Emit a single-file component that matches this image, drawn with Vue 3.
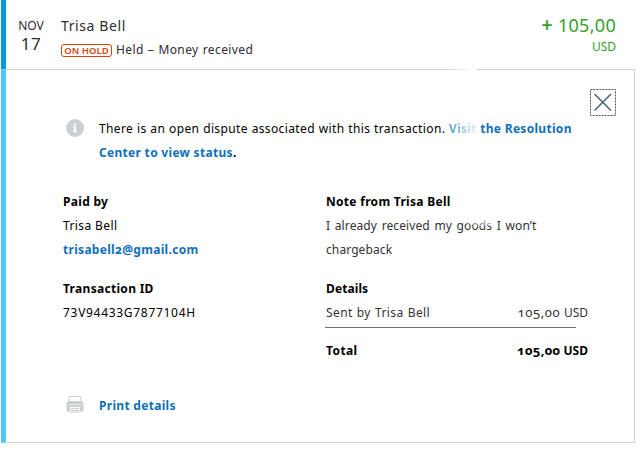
<!-- src/components/TransactionDetails.vue -->
<script setup>
const transaction = {
  month: 'NOV',
  day: '17',
  name: 'Trisa Bell',
  status: 'Held – Money received',
  amount: '105,00',
  currency: 'USD',
  email: 'trisabell2@gmail.com',
  id: '73V94433G7877104H',
  note: 'I already received my goods I won’t chargeback'
}
</script>

<template>
  <div class="transaction">
    <header class="summary">
      <div class="date">
        <span class="month">{{ transaction.month }}</span>
        <span class="day">{{ transaction.day }}</span>
      </div>
      <div class="info">
        <div class="name">{{ transaction.name }}</div>
        <div class="status">
          <span class="badge">ON HOLD</span>
          <span class="status-text">{{ transaction.status }}</span>
        </div>
      </div>
      <div class="amount">
        <div class="value"><span class="plus">+</span><span>{{ transaction.amount }}</span></div>
        <div class="currency">{{ transaction.currency }}</div>
      </div>
    </header>

    <section class="panel">
      <span class="line-fade"></span>
      <button class="close" aria-label="Close">
        <svg width="26" height="27" viewBox="0 0 26 27">
          <rect x="0.5" y="0.5" width="25" height="26" fill="none" stroke="#555" stroke-dasharray="2 1" />
          <path d="M4.5 5 L21 21.5 M21 5 L4.5 21.5" fill="none" stroke="#46606f" stroke-width="1.5" />
        </svg>
      </button>

      <div class="dispute">
        <svg class="info-icon" width="18" height="18" viewBox="0 0 18 18">
          <circle cx="9" cy="9" r="9" fill="#c9d1d5" />
          <path d="M8 4.5h2v2H8z M7 7.5h3V12h1v1.3H7V12h1V8.8H7z" fill="#fff" />
        </svg>
        <p class="message">
          <span class="plain">There is an open dispute associated with this transaction. </span>
          <a class="link"><span class="faded">Visit</span> the Resolution<br />Center to view status</a><b>.</b>
        </p>
      </div>

      <div class="columns">
        <div class="left">
          <h4>Paid by</h4>
          <div class="payer">{{ transaction.name }}</div>
          <a class="link">{{ transaction.email }}</a>
          <h4 class="second">Transaction ID</h4>
          <div class="id">{{ transaction.id }}</div>
        </div>

        <div class="right">
          <h4>Note from {{ transaction.name }}</h4>
          <p class="note">{{ transaction.note }}<span class="smudge"></span></p>
          <h4 class="second details">Details</h4>
          <div class="row sent">
            <span>Sent by {{ transaction.name }}</span>
            <span class="sum"><span class="number">{{ transaction.amount }}</span> USD</span>
          </div>
          <div class="rule"></div>
          <div class="row total">
            <span>Total</span>
            <span class="sum"><span class="number">{{ transaction.amount }}</span> USD</span>
          </div>
        </div>
      </div>

      <div class="print">
        <svg width="18" height="18" viewBox="0 0 18 18">
          <path d="M3 6.5V1.5h12v5" fill="none" stroke="#c9d1d5" />
          <path d="M2 6h14l1.5 2v7l-1 1.5h-15L.5 15V8z" fill="#c9d1d5" />
          <path d="M2 9.5h14" stroke="#e6eaeb" />
          <path d="M3.5 11.5h11v5.5h-11z" fill="#fff" stroke="#c9d1d5" />
          <path d="M5 13.5h8M5 15.5h8" stroke="#c9d1d5" />
        </svg>
        <a class="link">Print details</a>
      </div>
    </section>
  </div>
</template>

<style>
body {
  background: #fff;
}
</style>

<style scoped>
.transaction {
  width: 634px;
  margin-left: 1px;
  font-family: 'Noto Sans', sans-serif;
  font-size: 12px;
  line-height: 24px;
  color: #000;
  white-space: nowrap;
}

.summary {
  box-sizing: border-box;
  display: flex;
  height: 69px;
  padding: 14px 19px 0 12px;
  border-left: 5px solid #009cde;
  color: #2c2e2f;
}

.date {
  display: flex;
  flex-direction: column;
  align-items: center;
  width: 26px;
}

.month {
  margin-top: 3px;
  font-size: 12px;
  line-height: 18px;
}

.day {
  font-size: 17px;
  line-height: 17px;
  letter-spacing: 0.6px;
}

.info {
  flex: 1;
  margin-left: 17px;
}

.name {
  font-size: 14px;
  line-height: 24px;
  letter-spacing: 0.6px;
}

.status {
  display: flex;
  align-items: center;
  gap: 4px;
  height: 24px;
}

.status-text {
  letter-spacing: 0.4px;
  word-spacing: 0.6px;
}

.badge {
  box-sizing: border-box;
  width: 51px;
  height: 13px;
  border: 1px solid #d9420b;
  border-radius: 3px;
  color: #d9420b;
  font-size: 9.5px;
  font-weight: 600;
  line-height: 11px;
  text-align: center;
}

.amount {
  margin-top: -1px;
  color: #35a02c;
  text-align: right;
}

.value {
  display: flex;
  align-items: center;
  justify-content: flex-end;
  gap: 5px;
  font-size: 18px;
  line-height: 24px;
  letter-spacing: 0.3px;
}

.plus {
  font-size: 20px;
  font-weight: 600;
}

.currency {
  font-size: 12px;
  line-height: 20px;
}

.panel {
  box-sizing: border-box;
  position: relative;
  height: 374px;
  padding-top: 47px;
  border: 1px solid #c8d0d3;
  border-left: 5px solid #4cc9fb;
}

.line-fade {
  position: absolute;
  top: -1px;
  left: 442px;
  width: 29px;
  height: 1px;
  background: linear-gradient(90deg, rgba(255, 255, 255, 0), #fff 85%);
}

.close {
  position: absolute;
  top: 19px;
  right: 18px;
  width: 26px;
  height: 27px;
  padding: 0;
  border: 0;
  background: none;
}

.close svg,
.print svg,
.info-icon {
  display: block;
}

.dispute {
  display: flex;
  padding-left: 60px;
}

.info-icon {
  margin-top: 2px;
}

.message {
  margin: 0 0 0 15px;
}

.plain {
  letter-spacing: 0.37px;
  word-spacing: 0.3px;
}

.link {
  color: #0f70ba;
  font-weight: 700;
  letter-spacing: 0.3px;
}

.faded {
  background: linear-gradient(90deg, #4f99cf, #e6f1f9);
  background-clip: text;
  -webkit-background-clip: text;
  color: transparent;
}

.columns {
  display: flex;
  margin-top: 25px;
  padding-left: 57px;
  font-variant-numeric: oldstyle-nums;
}

h4 {
  margin: 0;
  font-size: 12px;
  font-weight: 700;
  letter-spacing: 0.3px;
}

h4.second {
  margin-top: 15px;
}

h4.details {
  letter-spacing: 0.1px;
}

.left {
  width: 263px;
}

.left > * {
  display: block;
}

.payer {
  letter-spacing: 0.4px;
}

.id {
  font-variant-numeric: lining-nums;
  letter-spacing: 0.7px;
}

.right {
  width: 262px;
}

.note {
  position: relative;
  width: 225px;
  margin: 0;
  color: #333;
  letter-spacing: 0.1px;
  word-spacing: 1.4px;
  white-space: normal;
}

.smudge {
  position: absolute;
  top: 0;
  left: 136px;
  width: 36px;
  height: 12px;
  border-radius: 0 0 50% 50%;
  background: linear-gradient(90deg, rgba(255, 255, 255, 0.2), rgba(255, 255, 255, 0.7));
}

.row {
  display: flex;
  justify-content: space-between;
  height: 24px;
  letter-spacing: 0.4px;
}

.sent {
  color: #333;
  word-spacing: 0.6px;
}

.sum {
  letter-spacing: 0;
}

/* the bigger digits must not push the baseline of the row down */
.number {
  font-size: 13px;
  line-height: 1;
  letter-spacing: 0.6px;
}

.rule {
  width: 251px;
  height: 1px;
  margin: 2px 0 11px -1px;
  background: #687078;
}

.total {
  font-weight: 700;
}

.total .number {
  letter-spacing: 0.3px;
}

.print {
  display: flex;
  align-items: center;
  gap: 15px;
  margin-top: 31px;
  padding-left: 60px;
}

.print svg {
  margin-bottom: 4px;
}
</style>
